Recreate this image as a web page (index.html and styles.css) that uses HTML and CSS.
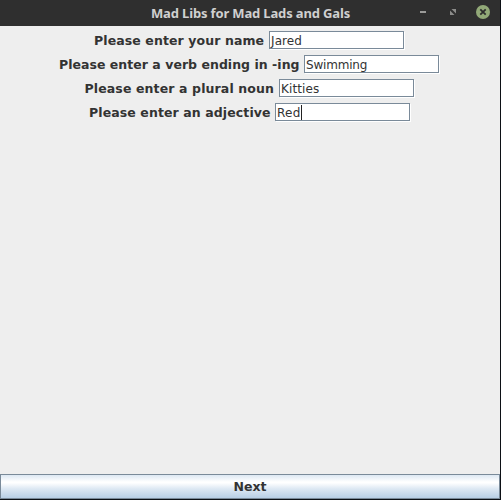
FILE: index.html
```html
<!DOCTYPE html>
<html lang="en">
<head>
<meta charset="utf-8">
<title>Mad Libs for Mad Lads and Gals</title>
<link rel="stylesheet" href="styles.css">
</head>
<body>
<div class="window">
  <header class="titlebar">
    <span class="title">Mad Libs for Mad Lads and Gals</span>
    <svg class="controls" width="91" height="26" viewBox="0 0 91 26">
      <path d="M10 12h6" stroke="#9b9b99" stroke-width="2"/>
      <path d="M41.5 9H46v4.5zM40 10.500V15h4.500z" fill="#8c8c8a"/>
      <circle cx="73" cy="12" r="7" fill="#92a978"/>
      <path d="M70.3 9.3l5.4 5.4M75.7 9.3l-5.4 5.4" stroke="#2d2d2d" stroke-width="1.8"/>
    </svg>
  </header>
  <main class="form">
    <div class="row name"><span class="label">Please enter your name</span><span class="field">Jared</span></div>
    <div class="row verb"><span class="label">Please enter a verb ending in -ing</span><span class="field">Swimming</span></div>
    <div class="row noun"><span class="label">Please enter a plural noun</span><span class="field">Kitties</span></div>
    <div class="row adjective"><span class="label">Please enter an adjective</span><span class="field">Red<i class="caret"></i></span></div>
  </main>
  <div class="next">Next</div>
</div>
</body>
</html>
```
FILE: styles.css
```css
* { box-sizing: border-box; }
body { margin: 0; overflow: hidden; background: #0c1015; }
.window {
  width: 500px;
  height: 499px;
  display: flex;
  flex-direction: column;
  background: #eeeeee;
  color: #333333;
}
.titlebar {
  height: 26px;
  display: flex;
  flex: none;
  justify-content: space-between;
  background: #2f2f2f;
  padding-left: 151px;
}
.title {
  font: bold 13px/26px "Noto Sans", sans-serif;
  letter-spacing: -0.15px;
  color: #d0d0d0;
  white-space: nowrap;
}
.controls { flex: none; margin-right: -1px; }
.form { flex: 1; padding-top: 5px; }
.row {
  display: flex;
  height: 19px;
  margin-bottom: 5px;
}
.name { padding-left: 94px; }
.verb { padding-left: 59px; }
.noun { padding-left: 84.5px; }
.adjective { padding-left: 89px; }
.label {
  font: bold 12.5px/19px "DejaVu Sans", sans-serif;
  letter-spacing: 0.1px;
  white-space: nowrap;
  width: 175px;
}
.verb .label { width: 245px; letter-spacing: 0.03px; }
.noun .label { width: 194.5px; letter-spacing: 0.12px; }
.adjective .label { width: 186px; }
.field {
  width: 135px;
  height: 18px;
  display: flex;
  align-items: center;
  padding-left: 1px;
  border: 1px solid #7a8a99;
  background: #ffffff;
  box-shadow: 1px 1px 0 #ffffff;
  font: 12px/18px "DejaVu Sans", sans-serif;
  padding-top: 1px;
}
.name .field, .noun .field { letter-spacing: 0.1px; }
.verb .field { letter-spacing: -0.2px; }
.adjective .field { letter-spacing: 0.3px; }
.caret { width: 1px; height: 15px; background: #222222; }
.next {
  height: 25px;
  border: 1px solid #7a8a99;
  background: linear-gradient(#dde8f3 0%, #ffffff 30%, #ffffff 34%, #dde8f3 60%, #b8cfe5 100%);
  font: bold 12.5px/23px "DejaVu Sans", sans-serif;
  text-align: center;
}
```
